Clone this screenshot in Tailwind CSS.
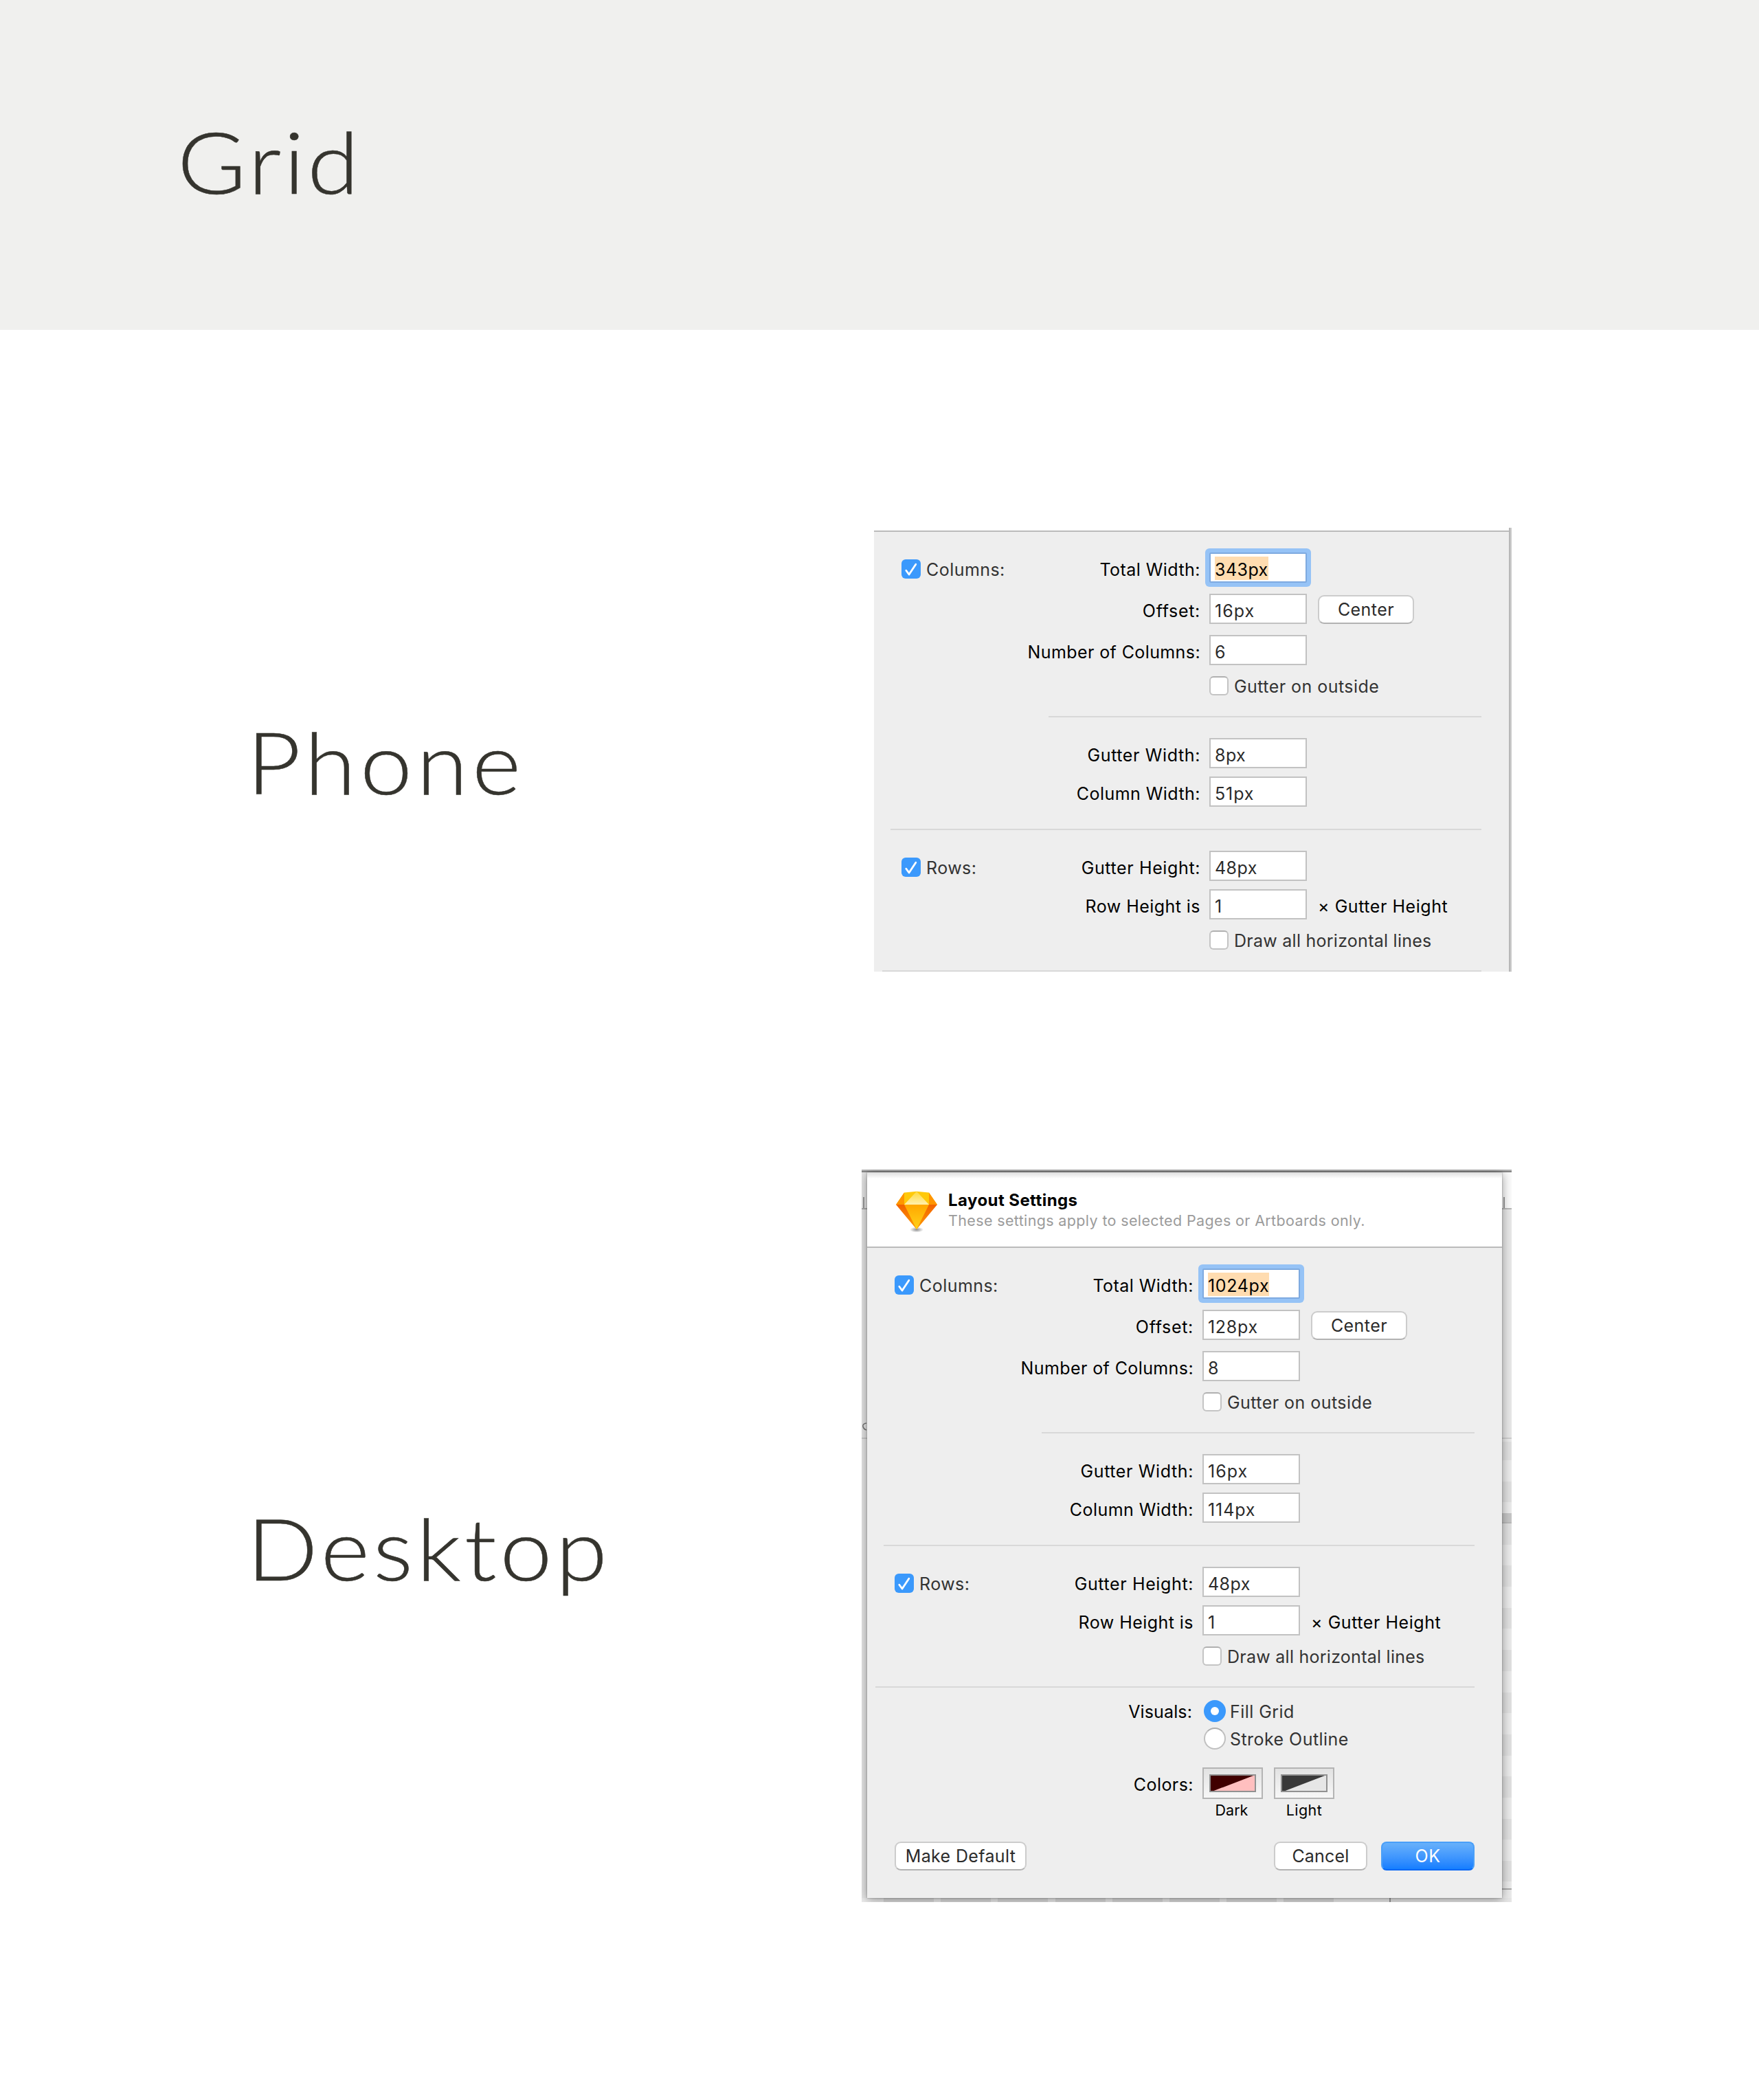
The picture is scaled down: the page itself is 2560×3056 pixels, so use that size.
<!DOCTYPE html>
<html lang="en">
<head>
<meta charset="utf-8">
<title>Grid</title>
<script src="https://cdn.jsdelivr.net/npm/@tailwindcss/browser@4"></script>
</head>
<body class="bg-white w-[2560px] h-[3056px] overflow-hidden font-['Inter',sans-serif]">
<svg class="hidden">
  <defs>
    <symbol id="check" viewBox="0 0 28 28"><rect width="28" height="28" rx="6" fill="#3b99fc"/><path d="M6.8 16.2 11 22 20.8 7.2" fill="none" stroke="#fff" stroke-width="2.8" stroke-linecap="round" stroke-linejoin="round"/></symbol>
  </defs>
</svg>

<header class="h-[480px] bg-[#f0f0ee] pt-[159px] pl-[258px]">
  <h1 class="font-['Lato',sans-serif] font-light text-[124px] leading-[150px] tracking-[3.5px] text-[#35342e] [-webkit-text-stroke:0.5px_#35342e]"><span class="block w-fit origin-left scale-x-110">Grid</span></h1>
</header>

<main class="pl-[359px]">
  <!-- Phone -->
  <section class="flex items-start pt-[288px]">
    <h2 class="w-[913px] mt-[265px] font-['Lato',sans-serif] font-light text-[124px] leading-[150px] tracking-[5.4px] text-[#35342e] [-webkit-text-stroke:0.5px_#35342e]"><span class="block w-fit origin-left scale-x-110">Phone</span></h2>
    <div class="flex w-[928px] h-[646px]">
      <div class="w-[924px] mt-1 h-[642px] bg-[#eeeeee] border-t-2 border-[#bbbbbb] text-[25px] tracking-[0.45px] text-black whitespace-nowrap">
        <div class="pt-[30px]">
          <div class="grid grid-cols-[475px_1fr] gap-[13px] h-[44px]">
            <div class="flex justify-between pl-10 leading-[50px]">
              <div class="flex gap-2 mt-[10px] h-[28px] leading-[30px] text-[#333]"><svg class="size-[28px]"><use href="#check"/></svg>Columns:</div>
              <span>Total Width:</span>
            </div>
            <div><div class="w-[142px] h-[44px] border-2 border-[#7eaae0] bg-white rounded-[2px] shadow-[0_0_0_6px_#96c3f6] pl-[6px] leading-[46px]"><span class="bg-[#ffdcb0] pt-1">343px</span></div></div>
          </div>
          <div class="grid grid-cols-[475px_1fr] gap-[13px] h-[44px] mt-4">
            <div class="text-right leading-[50px] tracking-[0.7px]">Offset:</div>
            <div class="flex gap-4"><div class="w-[142px] h-[44px] border-2 border-[#c2c2c2] bg-white pl-[6px] leading-[46px] tracking-[1px] text-[#2b2b2b]">16px</div><div class="w-[140px] h-[42px] mt-[2px] border-2 border-[#cccccc] border-b-[#b2b2b2] bg-white rounded-[9px] text-center leading-[38px] text-[#2b2b2b]">Center</div></div>
          </div>
          <div class="grid grid-cols-[475px_1fr] gap-[13px] h-[44px] mt-4">
            <div class="text-right leading-[50px] tracking-[0.4px]">Number of Columns:</div>
            <div class="w-[142px] h-[44px] border-2 border-[#c2c2c2] bg-white pl-[6px] leading-[46px] text-[#2b2b2b]">6</div>
          </div>
          <div class="flex gap-2 pl-[488px] mt-4 h-[28px] leading-[30px] text-[#333]"><div class="size-[28px] border-2 border-[#c4c4c4] border-t-[#b0b0b0] bg-white rounded-[6px]"></div>Gutter on outside</div>
          <div class="h-[2px] bg-[#d8d8d8] ml-[254px] mr-10 mt-[30px]"></div>
          <div class="grid grid-cols-[475px_1fr] gap-[13px] h-[44px] mt-[30px]">
            <div class="text-right leading-[50px] tracking-[0.62px]">Gutter Width:</div>
            <div class="w-[142px] h-[44px] border-2 border-[#c2c2c2] bg-white pl-[6px] leading-[46px] text-[#2b2b2b]">8px</div>
          </div>
          <div class="grid grid-cols-[475px_1fr] gap-[13px] h-[44px] mt-3">
            <div class="text-right leading-[50px]">Column Width:</div>
            <div class="w-[142px] h-[44px] border-2 border-[#c2c2c2] bg-white pl-[6px] leading-[46px] tracking-[0.9px] text-[#2b2b2b]">51px</div>
          </div>
          <div class="h-[2px] bg-[#d8d8d8] ml-6 mr-10 mt-8"></div>
          <div class="grid grid-cols-[475px_1fr] gap-[13px] h-[44px] mt-[30px]">
            <div class="flex justify-between pl-10 leading-[50px]">
              <div class="flex gap-2 mt-[10px] h-[28px] leading-[30px] text-[#333]"><svg class="size-[28px]"><use href="#check"/></svg>Rows:</div>
              <span class="tracking-[0.62px]">Gutter Height:</span>
            </div>
            <div class="w-[142px] h-[44px] border-2 border-[#c2c2c2] bg-white pl-[6px] leading-[46px] text-[#2b2b2b]">48px</div>
          </div>
          <div class="grid grid-cols-[475px_1fr] gap-[13px] h-[44px] mt-3">
            <div class="text-right leading-[50px]">Row Height is</div>
            <div class="flex gap-4 leading-[50px] tracking-[0.55px]"><div class="w-[142px] h-[44px] border-2 border-[#c2c2c2] bg-white pl-[6px] leading-[46px] text-[#2b2b2b]">1</div>× Gutter Height</div>
          </div>
          <div class="flex gap-2 pl-[488px] mt-4 h-[28px] leading-[30px] tracking-[0.26px] text-[#333]"><div class="size-[28px] border-2 border-[#c4c4c4] border-t-[#b0b0b0] bg-white rounded-[6px]"></div>Draw all horizontal lines</div>
          <div class="h-[2px] bg-[#d8d8d8] ml-3 mr-10 mt-[30px]"></div>
        </div>
      </div>
      <div class="w-1 bg-[#cbcbcb] border-l-2 border-[#b7b7b7]"></div>
    </div>
  </section>

  <!-- Desktop -->
  <section class="flex items-start pt-[288px]">
    <h2 class="w-[895px] mt-[475px] font-['Lato',sans-serif] font-light text-[124px] leading-[150px] tracking-[4.6px] text-[#35342e] [-webkit-text-stroke:0.5px_#35342e]"><span class="block w-fit origin-left scale-x-110">Desktop</span></h2>
    <div class="w-[946px] h-[1066px] overflow-hidden bg-[#d8d8d8]">
      <div class="h-1 bg-[#b3b3b3] border-b-2 border-[#878787]"></div>
      <div class="flex h-[1056px]">
        <!-- window edge behind the sheet, left -->
        <div class="w-2 flex flex-col bg-[#e6e6e6]">
          <div class="h-[52px] flex flex-col justify-end"><div class="ml-[2px] w-[2px] h-4 bg-[#999]"></div></div>
          <div class="h-[2px] bg-[#aaa]"></div>
          <div class="h-[332px] bg-[#e4e4e4] pt-[310px]"><svg class="w-2 h-3" viewBox="0 0 8 12"><path d="M7 1Q1 2 2 6T7 11" fill="none" stroke="#777" stroke-width="1.6"/></svg></div>
          <div class="h-[2px] bg-[#c8c8c8]"></div>
        </div>
        <div class="relative z-10 w-[924px] bg-[#eeeeee] shadow-[0_2px_14px_rgba(0,0,0,0.4),0_0_2px_rgba(0,0,0,0.35)] text-[25px] tracking-[0.45px] text-black whitespace-nowrap">
          <div class="h-[110px] bg-white bg-linear-to-b from-[#dedede] to-white to-[9px] border-b-2 border-[#bbbbbb] pl-[42px] pt-[27px] flex gap-[16px]">
            <svg class="w-[60px] h-[62px]" viewBox="0 0 60 62">
              <defs>
                <radialGradient id="sh"><stop offset="0" stop-color="#000" stop-opacity=".45"/><stop offset="1" stop-color="#000" stop-opacity="0"/></radialGradient>
                <linearGradient id="face" x2="0" y2="1"><stop stop-color="#ffa700"/><stop offset="1" stop-color="#ffd21a"/></linearGradient>
                <linearGradient id="top" x2="0" y2="1"><stop stop-color="#ffd83a"/><stop offset="1" stop-color="#fff0ae"/></linearGradient>
                <linearGradient id="side" x2="0" y2="1"><stop stop-color="#f26200"/><stop offset="1" stop-color="#ff9c00"/></linearGradient>
              </defs>
              <ellipse cx="30" cy="56.500" rx="10" ry="4" fill="url(#sh)"/>
              <path d="M12 2.500 30 .800 48 2.500 60 20H0z" fill="#ffc90a"/>
              <path d="M12 2.500V20H0zM48 2.500V20H60z" fill="#ff9500"/>
              <path d="M30 .800 48 20H12z" fill="url(#top)"/>
              <path d="M0 20H60L30 56z" fill="url(#side)"/>
              <path d="M12 20H48L30 56z" fill="url(#face)"/>
            </svg>
            <div>
              <div class="text-[24px] font-bold leading-[28px] tracking-[0.43px]">Layout Settings</div>
              <div class="text-[21.5px] leading-[30px] tracking-[0.36px] text-[#9b9b9b]">These settings apply to selected Pages or Artboards only.</div>
            </div>
          </div>
          <div class="pt-[30px]">
            <div class="grid grid-cols-[475px_1fr] gap-[13px] h-[44px]">
              <div class="flex justify-between pl-10 leading-[50px]">
                <div class="flex gap-2 mt-[10px] h-[28px] leading-[30px] text-[#333]"><svg class="size-[28px]"><use href="#check"/></svg>Columns:</div>
                <span>Total Width:</span>
              </div>
              <div><div class="w-[142px] h-[44px] border-2 border-[#7eaae0] bg-white rounded-[2px] shadow-[0_0_0_6px_#96c3f6] pl-[6px] leading-[46px] tracking-[0.66px]"><span class="bg-[#ffdcb0] pt-1">1024px</span></div></div>
            </div>
            <div class="grid grid-cols-[475px_1fr] gap-[13px] h-[44px] mt-4">
              <div class="text-right leading-[50px] tracking-[0.7px]">Offset:</div>
              <div class="flex gap-4"><div class="w-[142px] h-[44px] border-2 border-[#c2c2c2] bg-white pl-[6px] leading-[46px] tracking-[0.7px] text-[#2b2b2b]">128px</div><div class="w-[140px] h-[42px] mt-[2px] border-2 border-[#cccccc] border-b-[#b2b2b2] bg-white rounded-[9px] text-center leading-[38px] text-[#2b2b2b]">Center</div></div>
            </div>
            <div class="grid grid-cols-[475px_1fr] gap-[13px] h-[44px] mt-4">
              <div class="text-right leading-[50px] tracking-[0.4px]">Number of Columns:</div>
              <div class="w-[142px] h-[44px] border-2 border-[#c2c2c2] bg-white pl-[6px] leading-[46px] text-[#2b2b2b]">8</div>
            </div>
            <div class="flex gap-2 pl-[488px] mt-4 h-[28px] leading-[30px] text-[#333]"><div class="size-[28px] border-2 border-[#c4c4c4] border-t-[#b0b0b0] bg-white rounded-[6px]"></div>Gutter on outside</div>
            <div class="h-[2px] bg-[#d8d8d8] ml-[254px] mr-10 mt-[30px]"></div>
            <div class="grid grid-cols-[475px_1fr] gap-[13px] h-[44px] mt-[30px]">
              <div class="text-right leading-[50px] tracking-[0.62px]">Gutter Width:</div>
              <div class="w-[142px] h-[44px] border-2 border-[#c2c2c2] bg-white pl-[6px] leading-[46px] tracking-[1px] text-[#2b2b2b]">16px</div>
            </div>
            <div class="grid grid-cols-[475px_1fr] gap-[13px] h-[44px] mt-3">
              <div class="text-right leading-[50px]">Column Width:</div>
              <div class="w-[142px] h-[44px] border-2 border-[#c2c2c2] bg-white pl-[6px] leading-[46px] tracking-[0.9px] text-[#2b2b2b]">114px</div>
            </div>
            <div class="h-[2px] bg-[#d8d8d8] ml-6 mr-10 mt-8"></div>
            <div class="grid grid-cols-[475px_1fr] gap-[13px] h-[44px] mt-[30px]">
              <div class="flex justify-between pl-10 leading-[50px]">
                <div class="flex gap-2 mt-[10px] h-[28px] leading-[30px] text-[#333]"><svg class="size-[28px]"><use href="#check"/></svg>Rows:</div>
                <span class="tracking-[0.62px]">Gutter Height:</span>
              </div>
              <div class="w-[142px] h-[44px] border-2 border-[#c2c2c2] bg-white pl-[6px] leading-[46px] text-[#2b2b2b]">48px</div>
            </div>
            <div class="grid grid-cols-[475px_1fr] gap-[13px] h-[44px] mt-3">
              <div class="text-right leading-[50px]">Row Height is</div>
              <div class="flex gap-4 leading-[50px] tracking-[0.55px]"><div class="w-[142px] h-[44px] border-2 border-[#c2c2c2] bg-white pl-[6px] leading-[46px] text-[#2b2b2b]">1</div>× Gutter Height</div>
            </div>
            <div class="flex gap-2 pl-[488px] mt-4 h-[28px] leading-[30px] tracking-[0.26px] text-[#333]"><div class="size-[28px] border-2 border-[#c4c4c4] border-t-[#b0b0b0] bg-white rounded-[6px]"></div>Draw all horizontal lines</div>
            <div class="h-[2px] bg-[#d8d8d8] ml-3 mr-10 mt-[30px]"></div>
          </div>
          <div class="grid grid-cols-[475px_1fr] gap-[13px] mt-[18px]">
            <div class="text-right leading-[34px] pr-[2px] tracking-[0.13px]">Visuals:</div>
            <div class="pl-[2px] flex flex-col gap-2 leading-[34px] text-[#333]">
              <div class="flex gap-[6px] h-8"><div class="size-8 rounded-full bg-[#3b99fc] flex items-center justify-center"><div class="size-3 rounded-full bg-white"></div></div>Fill Grid</div>
              <div class="flex gap-[6px] h-8"><div class="size-8 rounded-full bg-white border-2 border-[#c0c0c0] border-t-[#adadad]"></div>Stroke Outline</div>
            </div>
          </div>
          <div class="grid grid-cols-[475px_1fr] gap-[13px] mt-[26px] h-[78px]">
            <div class="text-right leading-[50px]">Colors:</div>
            <div class="flex gap-4 text-[21.5px] leading-[32px] text-center">
              <div class="w-[88px]">
                <div class="h-[46px] border-2 border-[#b4b4b4] bg-linear-to-b from-[#e2e2e2] to-[#f7f7f7] p-2"><svg class="block w-[68px] h-[26px]" viewBox="0 0 68 26"><path d="M0 0H68V26H0z" fill="#ffbfbf"/><path d="M2 2H64L4 25H2z" fill="#400000"/><path d="M1 1H67V25H1z" fill="none" stroke="#919191" stroke-width="2"/></svg></div>
                <div class="pr-[3px] tracking-normal">Dark</div>
              </div>
              <div class="w-[88px]">
                <div class="h-[46px] border-2 border-[#b4b4b4] bg-linear-to-b from-[#e2e2e2] to-[#f7f7f7] p-2"><svg class="block w-[68px] h-[26px]" viewBox="0 0 68 26"><path d="M0 0H68V26H0z" fill="#e6e6e6"/><path d="M2 2H64L4 25H2z" fill="#393939"/><path d="M1 1H67V25H1z" fill="none" stroke="#919191" stroke-width="2"/></svg></div>
                <div>Light</div>
              </div>
            </div>
          </div>
          <div class="flex px-10 mt-[30px] text-center leading-[38px] text-[#2b2b2b]">
            <div class="w-[192px] h-[42px] border-2 border-[#cccccc] border-b-[#b2b2b2] bg-white rounded-[9px] tracking-[0.35px]">Make Default</div>
            <div class="w-[136px] h-[42px] ml-auto border-2 border-[#cccccc] border-b-[#b2b2b2] bg-white rounded-[9px] tracking-[0.2px]">Cancel</div>
            <div class="w-[136px] h-[42px] ml-5 rounded-[8px] bg-linear-to-b from-[#6bb3fa] to-[#0a7bff] border-2 border-[#4a9ff8] border-b-[#0767f5] bg-origin-border text-white">OK</div>
          </div>
        </div>
        <!-- window edge behind the sheet, right -->
        <div class="w-[14px] flex flex-col bg-[#ebebeb]">
          <div class="h-[52px] bg-[#fbfbfb] flex items-end"><div class="ml-[2px] w-[2px] h-4 bg-[#999]"></div></div>
          <div class="h-[2px] bg-[#b8b8b8]"></div>
          <div class="h-[332px] bg-[#e8e8e8]"></div>
          <div class="h-[2px] bg-[#cfcfcf]"></div>
          <div class="h-[4px]"></div>
          <div class="h-[27px] bg-[#e1e1e1]"></div>
          <div class="h-[31px]"></div>
          <div class="h-[30px] bg-[#e1e1e1]"></div>
          <div class="h-[16px]"></div>
          <div class="h-[15px] bg-[#c6c6c6] border-b-2 border-[#bababa]"></div>
          <div class="h-[521px] bg-[repeating-linear-gradient(#e1e1e1_0_30.700px,#ebebeb_30.700px_61.400px)]"></div>
          <div class="h-[10px]"></div>
          <div class="h-[2px] bg-[#aaaaaa]"></div>
        </div>
      </div>
      <div class="flex h-[6px]">
        <div class="w-8 bg-[#ececec]"></div>
        <div class="w-[656px] bg-[repeating-linear-gradient(90deg,#dadada_0_73px,#ececec_73px_83.200px)]"></div>
        <div class="w-[80px] bg-[#ececec]"></div>
        <div class="w-[2px] bg-[#999]"></div>
        <div class="grow bg-[#e6e6e6]"></div>
      </div>
    </div>
  </section>
</main>
</body>
</html>
